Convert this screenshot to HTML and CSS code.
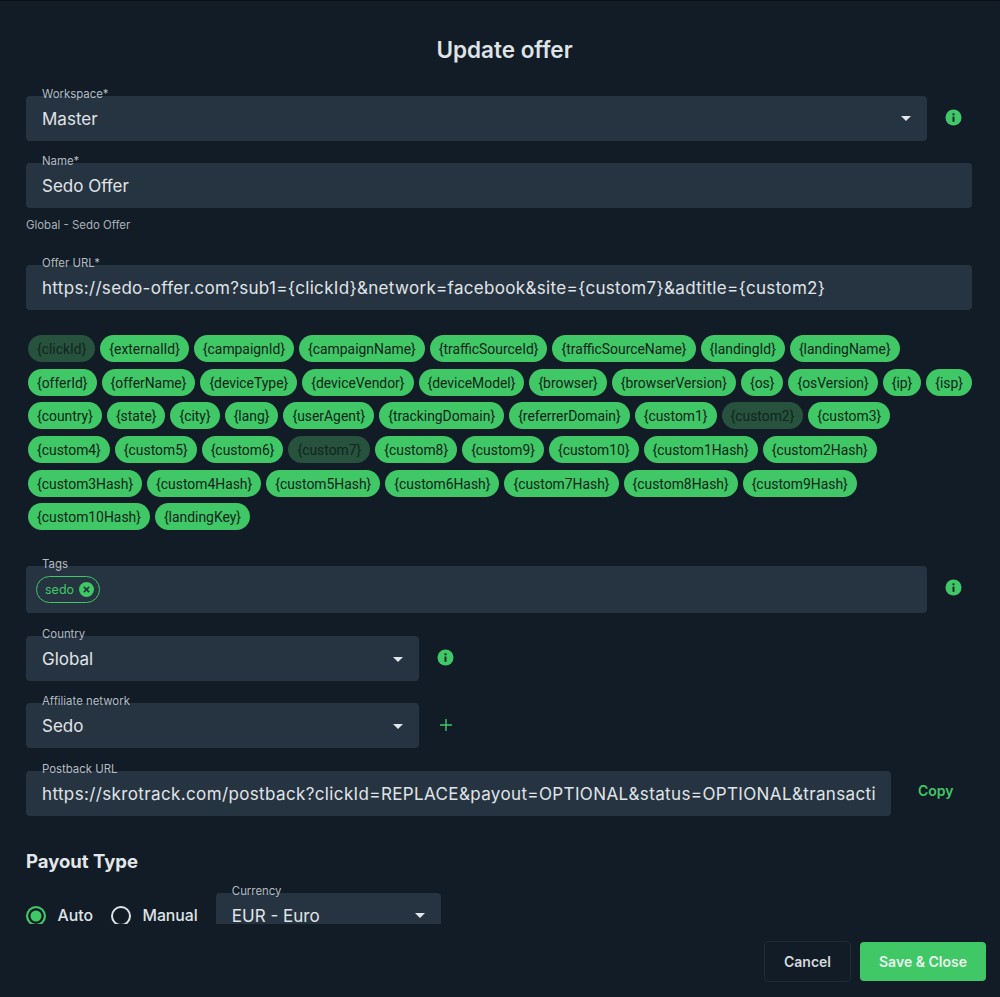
FILE: index.html
```html
<!DOCTYPE html>
<html lang="en">
<head>
<meta charset="utf-8">
<title>Update offer</title>
<link rel="stylesheet" href="styles.css">
</head>
<body>
<main class="modal">
  <h1 class="title">Update offer</h1>
  <div class="body">
    <div class="row row-name-workspace">
      <div class="field grow"><label>Workspace*</label><div class="control select"><span>Master</span><i class="caret"></i></div></div>
      <svg class="info" viewBox="0 0 18 18"><circle cx="9" cy="9" r="8.5" fill="#40c766"/><rect x="8" y="8" width="2" height="5.5" fill="#12202b"/><rect x="8" y="4.6" width="2" height="2" fill="#12202b"/></svg>
    </div>
    <div class="row row-name">
      <div class="field grow"><label>Name*</label><div class="control"><span>Sedo Offer</span></div></div>
    </div>
    <p class="hint">Global - Sedo Offer</p>
    <div class="row row-url">
      <div class="field grow"><label>Offer URL*</label><div class="control url"><span class="nowrap">https://sedo-offer.com?sub1={clickId}&amp;network=facebook&amp;site={custom7}&amp;adtitle={custom2}</span></div></div>
    </div>
    <div class="chips">
      <div class="chip-row"><span class="chip used">{clickId}</span><span class="chip">{externalId}</span><span class="chip">{campaignId}</span><span class="chip">{campaignName}</span><span class="chip">{trafficSourceId}</span><span class="chip">{trafficSourceName}</span><span class="chip">{landingId}</span><span class="chip">{landingName}</span></div>
      <div class="chip-row"><span class="chip">{offerId}</span><span class="chip">{offerName}</span><span class="chip">{deviceType}</span><span class="chip">{deviceVendor}</span><span class="chip">{deviceModel}</span><span class="chip">{browser}</span><span class="chip">{browserVersion}</span><span class="chip">{os}</span><span class="chip">{osVersion}</span><span class="chip">{ip}</span><span class="chip">{isp}</span></div>
      <div class="chip-row"><span class="chip">{country}</span><span class="chip">{state}</span><span class="chip">{city}</span><span class="chip">{lang}</span><span class="chip">{userAgent}</span><span class="chip">{trackingDomain}</span><span class="chip">{referrerDomain}</span><span class="chip">{custom1}</span><span class="chip used">{custom2}</span><span class="chip">{custom3}</span></div>
      <div class="chip-row"><span class="chip">{custom4}</span><span class="chip">{custom5}</span><span class="chip">{custom6}</span><span class="chip used">{custom7}</span><span class="chip">{custom8}</span><span class="chip">{custom9}</span><span class="chip">{custom10}</span><span class="chip">{custom1Hash}</span><span class="chip">{custom2Hash}</span></div>
      <div class="chip-row"><span class="chip">{custom3Hash}</span><span class="chip">{custom4Hash}</span><span class="chip">{custom5Hash}</span><span class="chip">{custom6Hash}</span><span class="chip">{custom7Hash}</span><span class="chip">{custom8Hash}</span><span class="chip">{custom9Hash}</span></div>
      <div class="chip-row"><span class="chip">{custom10Hash}</span><span class="chip">{landingKey}</span></div>
    </div>
    <div class="row row-tags">
      <div class="field grow"><label>Tags</label><div class="control tags"><span class="tag">sedo<svg class="tag-x" viewBox="0 0 14 14"><circle cx="7" cy="7" r="7" fill="#40c766"/><path d="M4.5 4.5l5 5M9.5 4.5l-5 5" stroke="#26343f" stroke-width="1.5" fill="none"/></svg></span></div></div>
      <svg class="info" viewBox="0 0 18 18"><circle cx="9" cy="9" r="8.5" fill="#40c766"/><rect x="8" y="8" width="2" height="5.5" fill="#12202b"/><rect x="8" y="4.6" width="2" height="2" fill="#12202b"/></svg>
    </div>
    <div class="row row-country">
      <div class="field half"><label>Country</label><div class="control select"><span>Global</span><i class="caret"></i></div></div>
      <svg class="info" viewBox="0 0 18 18"><circle cx="9" cy="9" r="8.5" fill="#40c766"/><rect x="8" y="8" width="2" height="5.5" fill="#12202b"/><rect x="8" y="4.6" width="2" height="2" fill="#12202b"/></svg>
    </div>
    <div class="row row-network">
      <div class="field half"><label>Affiliate network</label><div class="control select"><span>Sedo</span><i class="caret"></i></div></div>
      <svg class="plus" viewBox="0 0 12 12"><path d="M6 0v12M0 6h12" stroke="#40c766" stroke-width="1.4" fill="none"/></svg>
    </div>
    <div class="row row-postback">
      <div class="field postback"><label>Postback URL</label><div class="control url-long"><span class="clip">https://skrotrack.com/postback?clickId=REPLACE&amp;payout=OPTIONAL&amp;status=OPTIONAL&amp;transactionId=OPTIONAL</span></div></div>
      <span class="copy">Copy</span>
    </div>
    <h2 class="section">Payout Type</h2>
    <div class="row row-payout">
      <span class="radio on"></span><span class="radio-label">Auto</span>
      <span class="radio"></span><span class="radio-label">Manual</span>
      <div class="field currency"><label>Currency</label><div class="control select"><span>EUR - Euro</span><i class="caret"></i></div></div>
    </div>
  </div>
  <footer class="footer">
    <button class="btn cancel">Cancel</button>
    <button class="btn save">Save &amp; Close</button>
  </footer>
</main>
</body>
</html>
```

FILE: styles.css
```css
* { box-sizing: border-box; }
html, body { margin: 0; height: 100%; background: #0e1820; }
body { font-family: Inter, "Liberation Sans", sans-serif; overflow: hidden; }
.modal { height: 997px; background: #111c26; border-top: 1px solid #0a1016; display: flex; flex-direction: column; }
.title { margin: 0; height: 75px; padding: 36px 0 0 9px; text-align: center; font-size: 22.5px; line-height: 26px; font-weight: 600; color: #dfe3e6; }
.body { height: 848px; overflow: hidden; padding: 20px 28px 0 26px; }
.row { display: flex; align-items: center; }
.grow { flex: 1; }
.field { position: relative; }
.field label { position: absolute; left: 16px; top: -9px; font-size: 11.4px; line-height: 14px; color: #b4bbc1; }
.control { height: 44.5px; background: #263442; border-radius: 4px; display: flex; align-items: center; padding: 1px 16px 0; color: #e0e4e7; font-size: 17px; }
.url { letter-spacing: 0.32px; }
.url-long { letter-spacing: 0.37px; }
.select { justify-content: space-between; }
.caret { width: 0; height: 0; border-left: 5.5px solid transparent; border-right: 5.5px solid transparent; border-top: 5px solid #e4e7ea; }
.info { width: 17px; height: 17px; margin-left: 18px; margin-right: 10px; flex: none; }
.row-name-workspace .info { margin-top: -2px; }
.row-name { margin-top: 22.5px; }
.hint { margin: 10.5px 0 0; font-size: 11.4px; line-height: 14px; color: #aab2b9; }
.row-url { margin-top: 33px; }
.nowrap { white-space: nowrap; }
.chips { display: flex; flex-direction: column; gap: 6.7px; margin-top: 25.5px; padding: 0 2px; }
.chip-row { display: flex; gap: 5px; }
.chip { height: 27px; line-height: 28px; padding: 0 9px; border-radius: 14px; background: #40c766; color: #12261c; font-family: Roboto, sans-serif; font-size: 13.9px; }
.chip.used { background: #26523e; color: #12261c; }
.row-tags { margin-top: 36px; }
.tags { height: 47px; padding: 0 10px; }
.tag { display: flex; align-items: center; gap: 5px; height: 27px; padding: 0 5px 0 8px; border: 1px solid #40c766; border-radius: 14px; color: #40c766; font-size: 12.5px; }
.tag-x { width: 15px; height: 15px; }
.row-tags .info { margin-top: -4px; }
.row-country { margin-top: 23px; }
.half { width: 393px; }
.row-country .info { margin-top: -2px; }
.row-network { margin-top: 22.5px; }
.plus { width: 12px; height: 12px; margin-left: 21px; margin-top: -2px; }
.row-postback { margin-top: 23.5px; }
.postback { width: 865px; }
.clip { white-space: nowrap; overflow: hidden; display: block; width: 100%; }
.copy { margin-left: 27px; margin-top: -6px; color: #40c766; font-size: 14px; font-weight: 600; }
.section { margin: 34px 0 0; font-size: 18.5px; line-height: 22px; font-weight: 700; color: #e4e7ea; }
.row-payout { margin-top: 21px; height: 45px; align-items: center; }
.radio { width: 20px; height: 20px; border-radius: 50%; border: 2px solid #dfe3e6; flex: none; margin-top: 1px; }
.radio.on { border-color: #40c766; background: #40c766; box-shadow: inset 0 0 0 2.5px #111c26; }
.radio-label { margin-left: 11.5px; margin-right: 18px; font-size: 15.8px; font-weight: 500; color: #dfe3e6; margin-top: 1px; }
.currency { width: 225px; }
.footer { flex: 1; display: flex; justify-content: flex-end; align-items: flex-start; gap: 9px; padding: 17px 14px 0 0; }
.btn { font: 600 14px Inter, "Liberation Sans", sans-serif; height: 39px; border-radius: 4px; }
.cancel { width: 87px; height: 41px; background: transparent; border: 1px solid #1f2a35; color: #d4d9dd; }
.save { width: 126px; background: #40c766; border: 0; color: #e8f5ec; margin-top: 1px; }
```
